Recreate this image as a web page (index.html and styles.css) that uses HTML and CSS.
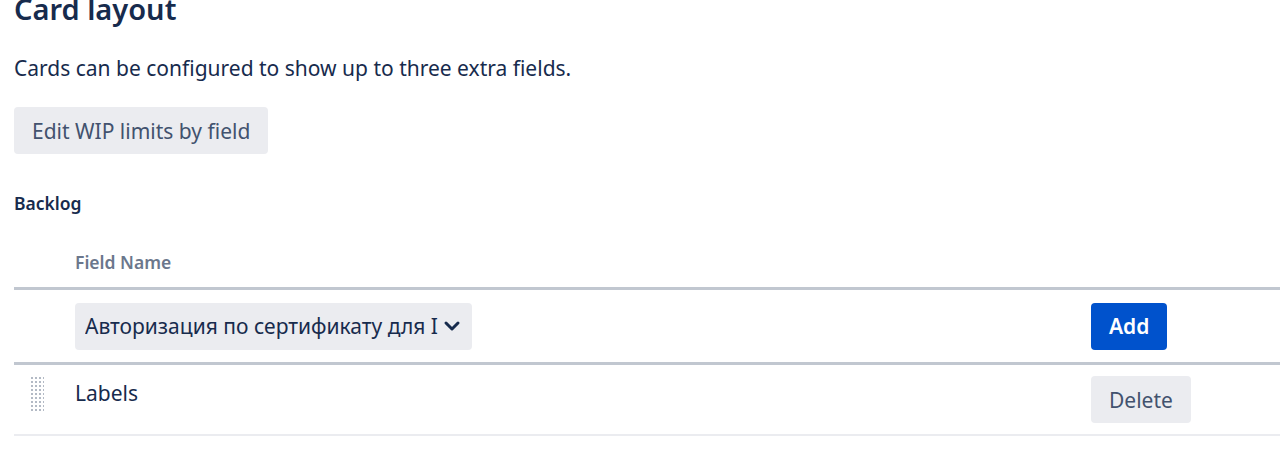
FILE: index.html
```html
<!DOCTYPE html>
<html lang="en">

<head>
    <meta charset="UTF-8">
    <meta name="viewport" content="width=device-width, initial-scale=1.0">
    <title>Card layout</title>
    <link rel="stylesheet" href="styles.css">
</head>

<body>

    <div class="page">
        <h2>Card layout</h2>
        <p class="intro">Cards can be configured to show up to three extra fields.</p>
        <button type="button" class="btn">Edit WIP limits by field</button>

        <h5 class="section-title">Backlog</h5>

        <table class="fields">
            <thead>
                <tr>
                    <th class="col-handle"></th>
                    <th class="col-name">Field Name</th>
                    <th class="col-action"></th>
                </tr>
            </thead>
            <tbody>
                <tr class="add-row">
                    <td></td>
                    <td>
                        <div class="select">
                            <span class="select-value">Авторизация по сертификату для I</span>
                            <svg class="chevron" width="20" height="20" viewBox="0 0 20 20">
                                <path d="M4 7 L10 13 L16 7" fill="none" stroke="#172b4d" stroke-width="3" stroke-linecap="round" stroke-linejoin="round"/>
                            </svg>
                        </div>
                    </td>
                    <td><button type="button" class="btn btn-primary">Add</button></td>
                </tr>
                <tr class="field-row">
                    <td><span class="handle"></span></td>
                    <td><span class="field-name">Labels</span></td>
                    <td><button type="button" class="btn">Delete</button></td>
                </tr>
            </tbody>
        </table>
    </div>

</body>

</html>
```

FILE: styles.css
```css
body {
    font-family: "Noto Sans", "Open Sans", sans-serif;
    color: #172b4d;
    background-color: #fff;
    margin: 0;
    padding: 0;
}

.page {
    padding: 0 0 0 14px;
}

h2 {
    font-size: 29px;
    font-weight: 600;
    line-height: 34px;
    margin: -8px 0 0;
}

.intro {
    font-size: 21px;
    line-height: 28px;
    margin: 28px 0 25px;
}

.btn {
    font-family: inherit;
    font-size: 21px;
    color: #42526e;
    background-color: #ebecf0;
    border: none;
    border-radius: 4px;
    height: 47px;
    padding: 0 18px;
    cursor: pointer;
}

.btn:hover {
    background-color: #dfe1e6;
}

.btn-primary {
    background-color: #0052cc;
    color: #fff;
    font-weight: 600;
}

.btn-primary:hover {
    background-color: #0065ff;
}

.section-title {
    font-size: 17.5px;
    font-weight: 600;
    line-height: 24px;
    margin: 37px 0 0;
}

.fields {
    width: 100%;
    border-collapse: collapse;
    margin-top: 21px;
}

.fields th {
    font-size: 17.5px;
    font-weight: 600;
    color: #6b778c;
    text-align: left;
    height: 51px;
    padding: 0;
    border-bottom: 3px solid #c1c7d0;
}

.col-handle {
    width: 61px;
}

.col-action {
    width: 189px;
}

.fields td {
    padding: 0;
}

.add-row td {
    height: 72px;
    border-bottom: 3px solid #c1c7d0;
}

.field-row td {
    height: 69px;
    vertical-align: top;
    border-bottom: 2px solid #ebecf0;
}

.select {
    display: flex;
    align-items: center;
    width: 397px;
    height: 47px;
    box-sizing: border-box;
    padding: 0 10px;
    background-color: #ebecf0;
    border-radius: 4px;
    font-size: 21px;
}

.select-value {
    flex: 1;
    white-space: nowrap;
    overflow: hidden;
}

.chevron {
    margin-left: 2px;
}

.field-name {
    display: block;
    font-size: 21px;
    line-height: 28px;
    margin-top: 14px;
}

.field-row .btn {
    margin-top: 11px;
}

.handle {
    display: block;
    width: 14px;
    height: 36px;
    margin: 11px 0 0 16px;
    background-image: radial-gradient(circle, #b3bac5 1.2px, transparent 1.5px);
    background-size: 4px 4px;
}
```
